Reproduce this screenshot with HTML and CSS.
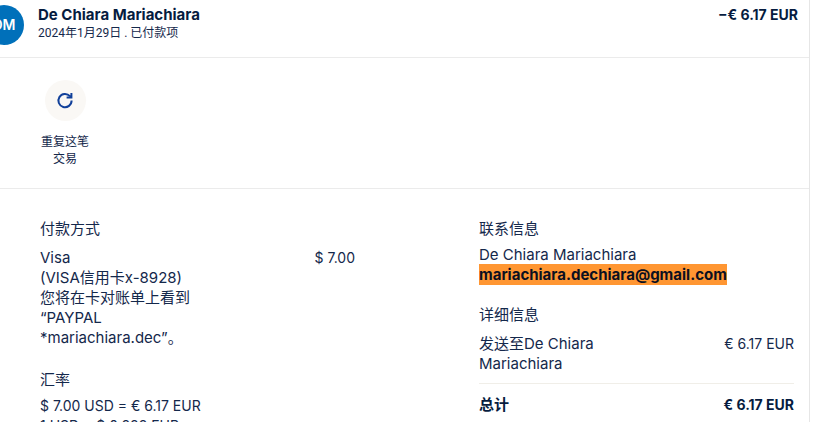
FILE: index.html
```html
<!DOCTYPE html>
<html lang="zh-CN">

<head>
    <meta charset="UTF-8">
    <title>交易详情</title>
    <meta name="viewport" content="width=device-width, initial-scale=1.0">
    <link rel="stylesheet" href="styles.css">
</head>

<body>
    <main class="transaction">
        <!-- 交易摘要 -->
        <header class="summary">
            <div class="avatar">DM</div>
            <div class="summary-info">
                <h1 class="summary-name">De Chiara Mariachiara</h1>
                <p class="summary-date">2024年1月29日 . 已付款项</p>
            </div>
            <div class="summary-amount">−€ 6.17 EUR</div>
        </header>

        <!-- 操作按钮 -->
        <div class="actions">
            <button type="button" class="action-btn">
                <span class="action-icon">
                    <svg width="18" height="18" viewBox="0 0 18 18" fill="none" stroke="#11409a" stroke-width="2">
                        <path d="M13.9 4.2A6.6 6.6 0 1 0 15.6 8.6" />
                        <path d="M15.4 1V5.6H10.6" />
                        <path d="M15.4 2.6V5.6H12.4Z" fill="#11409a" stroke="none" />
                    </svg>
                </span>
                <span class="action-label">重复这笔交易</span>
            </button>
        </div>

        <!-- 交易详情 -->
        <div class="details">
            <div class="column">
                <section class="section payment">
                    <h2 class="section-title spaced">付款方式</h2>
                    <div class="row">
                        <p class="row-label">Visa<br>(VISA信用卡x-8928)<br>您将在卡对账单上看到<br>“PAYPAL<br>*mariachiara.dec”。</p>
                        <span class="row-value">$ 7.00</span>
                    </div>
                </section>
                <section class="section">
                    <h2 class="section-title">汇率</h2>
                    <p class="rate">$ 7.00 USD = € 6.17 EUR</p>
                    <p class="rate">1 USD = $ 0.882 EUR</p>
                </section>
            </div>
            <div class="column">
                <section class="section">
                    <h2 class="section-title">联系信息</h2>
                    <p>De Chiara Mariachiara</p>
                    <p><a class="email" href="mailto:mariachiara.dechiara@gmail.com">mariachiara.dechiara@gmail.com</a></p>
                </section>
                <section class="section">
                    <h2 class="section-title spaced">详细信息</h2>
                    <div class="row">
                        <p class="row-label">发送至De Chiara Mariachiara</p>
                        <span class="row-value">€ 6.17 EUR</span>
                    </div>
                    <div class="row total">
                        <span>总计</span>
                        <span class="row-value">€ 6.17 EUR</span>
                    </div>
                </section>
            </div>
        </div>
    </main>
</body>

</html>
```

FILE: styles.css
```css
* {
    margin: 0;
    padding: 0;
    box-sizing: border-box;
}

body {
    height: 100vh;
    overflow: hidden;
    background-color: #fff;
    color: #14284b;
    font-family: Inter, "Noto Sans CJK SC", sans-serif;
    font-size: 15px;
    line-height: 20px;
}

.transaction {
    min-height: 100vh;
    margin-left: -16px;
    margin-right: 17px;
    border-right: 1px solid #e6e6e6;
}

/* 交易摘要 */
.summary {
    display: flex;
    align-items: flex-start;
    gap: 14px;
    padding: 5px 11px 12px 0;
    border-bottom: 1px solid #ebebeb;
}

.avatar {
    display: flex;
    align-items: center;
    justify-content: center;
    flex-shrink: 0;
    width: 40px;
    height: 40px;
    border-radius: 50%;
    background-color: #0070ba;
    color: #fff;
    font-size: 14px;
    font-weight: 600;
}

.summary-info {
    flex: 1;
}

.summary-name,
.summary-amount {
    font-size: 15px;
    font-weight: 700;
    line-height: 20px;
    color: #061c3f;
}

.summary-amount {
    font-size: 14px;
}

.summary-date {
    font-family: Roboto, "Noto Sans CJK SC", sans-serif;
    font-size: 12px;
    line-height: 16px;
}

/* 操作按钮 */
.actions {
    padding: 22px 56px 21px;
    border-bottom: 1px solid #ebebeb;
}

.action-btn {
    display: flex;
    flex-direction: column;
    align-items: center;
    gap: 12px;
    width: 50px;
    border: none;
    background: none;
    color: #14284b;
    font-family: inherit;
    cursor: pointer;
}

.action-icon {
    display: flex;
    align-items: center;
    justify-content: center;
    width: 41px;
    height: 41px;
    border-radius: 50%;
    background-color: #faf8f5;
}

.action-label {
    font-size: 12px;
    line-height: 17px;
}

/* 交易详情 */
.details {
    display: grid;
    grid-template-columns: 1fr 1fr;
    gap: 124px;
    padding: 30px 15px 0 56px;
}

.section {
    margin-bottom: 20px;
}

.payment {
    margin-bottom: 22px;
}

.section-title {
    margin-bottom: 6px;
    font-size: 15px;
    font-weight: 400;
    line-height: 20px;
}

.section-title.spaced {
    margin-bottom: 9px;
}

.row {
    display: flex;
    justify-content: space-between;
}

.row-label {
    max-width: 160px;
}

.row-value,
.rate {
    font-size: 14px;
    white-space: nowrap;
}

.email {
    padding: 1px 0;
    background-color: #ff9632;
    color: #0b1020;
    font-weight: 700;
    text-decoration: none;
}

.total {
    margin-top: 9px;
    padding-top: 11px;
    border-top: 1px solid #f0eee8;
    color: #061c3f;
    font-weight: 700;
}
```
